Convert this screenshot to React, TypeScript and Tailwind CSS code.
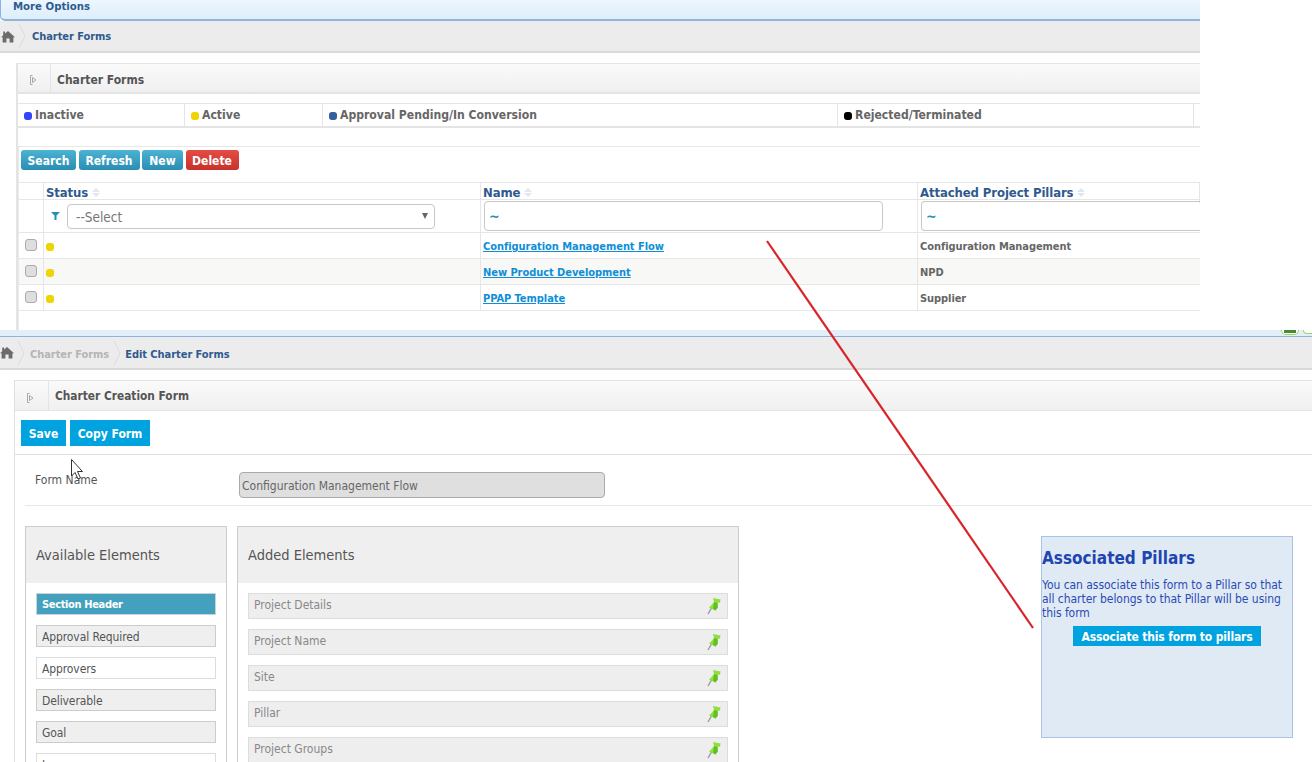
function Home() {
  return <svg width="14" height="13" viewBox="0 0 14 13" className="fill-[#6b6b6b]"><path d="M7 1 L14 7.2 L12.4 7.2 L12.4 12.6 L8.6 12.6 L8.6 8.6 L5.4 8.6 L5.4 12.6 L1.6 12.6 L1.6 7.2 L0 7.2 L2.2 5.2 L2.2 1.6 L4 1.6 L4 3.6 Z" /></svg>
}

function Chevron() {
  return <svg width="8" height="26" viewBox="0 0 8 26" className="fill-none stroke-[#dcdcdc]"><path d="M1 1 L7 13 L1 25" /></svg>
}

function Toggle() {
  return <svg width="7" height="10" viewBox="0 0 7 10" className="fill-none stroke-[#a8a8a8]"><path d="M2.5 0.5 H0.5 V9.5 H2.5 M2.5 2.5 L6 5 L2.5 7.5 Z" /></svg>
}

function Pin() {
  return <svg width="14" height="18" viewBox="0 0 14 18">
    <path d="M1 17 L4.5 11" className="stroke-[#9a9a9a]" strokeWidth="1.4" />
    <path d="M6 1 L13.5 2.5 L13 5.5 L10.5 6 L10.8 10.5 L8.5 13.5 L2 10.5 L5 7.5 L7 5 Z" className="fill-[#8fe03e]" />
    <path d="M7 5 L10.5 6 L10.8 10.5 L8.5 13.5 L6 12 Z" className="fill-[#62c024]" />
  </svg>
}

function Dot({ color }: { color: string }) {
  return <span className={`w-2 h-2 rounded-[3px] shrink-0 ${color}`} />
}

function TopButton({ label, width, red }: { label: string, width: string, red?: boolean }) {
  return <button className={`h-[20px] ${width} pt-[1px] rounded-[3px] text-white text-[12px] font-bold ${red ? "bg-gradient-to-b from-[#e24c44] to-[#c8312a]" : "bg-gradient-to-b from-[#4bb3d2] to-[#2a8db3]"}`}>{label}</button>
}

function Row({ name, pillar, odd }: { name: string, pillar: string, odd?: boolean }) {
  return <div className={`grid grid-cols-[25px_437px_437px_1fr] h-[26px] border-b border-[#e6e6e6] ${odd ? "bg-[#f8f8f6]" : ""}`}>
    <div className="border-r border-[#e6e6e6] flex items-center justify-center pb-[2px] pr-[1px]">
      <span className="w-3 h-3 rounded-[3px] border border-[#ababab] bg-[#dedede]" />
    </div>
    <div className="border-r border-[#e6e6e6] flex items-center pl-[2px] pt-[2px]"><Dot color="bg-[#f0d400]" /></div>
    <div className="border-r border-[#e6e6e6] flex items-center pl-[2px] pt-[3px] text-[11px] tracking-[-0.05px] font-bold text-[#0f8ed8] underline">{name}</div>
    <div className="flex items-center pl-[2px] pt-[3px] text-[11px] tracking-[-0.07px] font-bold text-[#666]">{pillar}</div>
  </div>
}

function SortHead({ label }: { label: string }) {
  return <div className="flex items-center gap-[4px] pl-[2px] border-r border-[#e6e6e6] text-[13px] tracking-[-0.1px] font-bold text-[#2f5a8f]">
    {label}
    <span className="flex flex-col gap-[1px]">
      <span className="w-0 h-0 border-x-[4px] border-x-transparent border-b-[4px] border-b-[#dfe8f2]" />
      <span className="w-0 h-0 border-x-[4px] border-x-transparent border-t-[4px] border-t-[#dfe8f2]" />
    </span>
  </div>
}

function Avail({ label, alt, active }: { label: string, alt?: boolean, active?: boolean }) {
  return <div className={`h-[22px] border flex items-center pl-[5px] pt-[2px] shrink-0 ${active ? "bg-[#43a1bd] border-[#c9d3d8] text-white font-bold text-[11px] tracking-[-0.35px]" : alt ? "bg-[#efefef] border-[#cccccc] text-[#555] text-[12px] tracking-[-0.1px]" : "bg-white border-[#dcdcdc] text-[#555] text-[12px] tracking-[-0.1px]"}`}>{label}</div>
}

function Added({ label }: { label: string }) {
  return <div className="h-[26px] bg-[#eeeeee] border border-[#dcdcdc] flex items-center justify-between pl-[5px] pr-[6px] text-[12px] text-[#888] shrink-0">
    <span className="-mt-[2px]">{label}</span>
    <Pin />
  </div>
}

export default function App() {
  return <div className="relative w-[1312px] h-[762px] overflow-hidden bg-white font-['DejaVu_Sans_Condensed',sans-serif]">
    <div className="w-[1200px] h-[330px] flex flex-col">
      <div className="h-[21px] shrink-0 bg-gradient-to-b from-[#ecf6fe] to-[#ddeefb] border-b-2 border-l border-[#8fb3d9] rounded-bl-[5px] pl-[12px] text-[11.3px] font-bold text-[#2f5a8f] leading-[14px]">More Options</div>
      <div className="h-[32px] shrink-0 bg-[#ececec] border-b-2 border-[#d9d9d9] flex items-center pl-[1px]">
        <Home />
        <span className="ml-[3px] mr-[6px]"><Chevron /></span>
        <span className="pt-[2px] text-[11px] tracking-[-0.05px] font-bold text-[#2f5a8f]">Charter Forms</span>
      </div>
      <div className="mt-[10px] ml-[16px] flex-1 border-l-2 border-[#e4e4e4] flex flex-col">
        <div className="h-[31px] shrink-0 border-t border-b-2 border-[#e4e4e4] bg-gradient-to-b from-[#fafafa] to-[#f0f0f0] flex items-center">
          <div className="w-[33px] h-full border-r border-[#e4e4e4] flex items-center justify-center pt-[4px] pr-[2px]"><Toggle /></div>
          <span className="ml-[6px] pt-[3px] text-[12px] font-bold text-[#555]">Charter Forms</span>
        </div>
        <div className="mt-[9px] h-[25px] shrink-0 border-t border-b-2 border-[#e4e4e4] flex text-[12.1px] font-bold text-[#666]">
          <div className="w-[167px] border-r border-[#e4e4e4] flex items-center gap-[3px] pl-[6px] pt-[1px]"><Dot color="bg-[#3344ff]" />Inactive</div>
          <div className="w-[138px] border-r border-[#e4e4e4] flex items-center gap-[3px] pl-[6px] pt-[1px]"><Dot color="bg-[#f0d400]" />Active</div>
          <div className="w-[515px] border-r border-[#e4e4e4] flex items-center gap-[3px] pl-[6px] pt-[1px]"><Dot color="bg-[#335f9f]" />Approval Pending/In Conversion</div>
          <div className="w-[356px] border-r border-[#e4e4e4] flex items-center gap-[3px] pl-[6px] pt-[1px]"><Dot color="bg-black" />Rejected/Terminated</div>
        </div>
        <div className="mt-[18px] flex-1 border-t border-l border-[#e8e8e8] flex flex-col">
          <div className="h-[36px] shrink-0 border-b border-[#e6e6e6] flex items-start gap-[2.5px] pt-[3px] pl-[2px]">
            <TopButton label="Search" width="w-[55px]" />
            <TopButton label="Refresh" width="w-[61px]" />
            <TopButton label="New" width="w-[41px]" />
            <TopButton label="Delete" width="w-[53px]" red />
          </div>
          <div className="grid grid-cols-[25px_437px_437px_1fr] h-[17px] shrink-0 border-b border-[#e6e6e6]">
            <div className="border-r border-[#e6e6e6]" />
            <SortHead label="Status" />
            <SortHead label="Name" />
            <SortHead label="Attached Project Pillars" />
          </div>
          <div className="grid grid-cols-[25px_437px_437px_1fr] h-[33px] shrink-0 border-b border-[#e6e6e6]">
            <div className="border-r border-[#e6e6e6]" />
            <div className="border-r border-[#e6e6e6] flex items-center pl-[7px] gap-[7px]">
              <svg width="9" height="8" viewBox="0 0 9 8" className="fill-[#2a8db3]"><path d="M0 0 H9 L5.5 3.5 V8 H3.5 V3.5 Z" /></svg>
              <div className="w-[368px] h-[25px] border border-[#c8c8c8] rounded-[4px] flex items-center justify-between pl-[8px] pr-[6px] pt-[2px] text-[13.5px] text-[#777]">
                --Select
                <span className="w-0 h-0 -mt-[2px] border-x-[3px] border-x-transparent border-t-[6px] border-t-[#666]" />
              </div>
            </div>
            <div className="border-r border-[#e6e6e6] flex items-center pl-[3px]">
              <div className="w-[399px] h-[30px] border border-[#c8c8c8] rounded-[4px] flex items-center pl-[4px] text-[14px] font-bold text-[#2a8db3]">~</div>
            </div>
            <div className="flex items-center pl-[3px]">
              <div className="w-full h-[30px] border border-r-0 border-[#c8c8c8] rounded-l-[4px] flex items-center pl-[4px] text-[14px] font-bold text-[#2a8db3]">~</div>
            </div>
          </div>
          <Row name="Configuration Management Flow" pillar="Configuration Management" />
          <Row name="New Product Development" pillar="NPD" odd />
          <Row name="PPAP Template" pillar="Supplier" />
        </div>
      </div>
    </div>

    <div className="h-[432px] flex flex-col">
      <div className="h-[7px] shrink-0 bg-[#e1effa] border-b border-[#8fb3d9]" />
      <div className="h-[33px] shrink-0 bg-[#ececec] border-b-2 border-[#d9d9d9] flex items-center">
        <Home />
        <span className="ml-[3px] mr-[5px]"><Chevron /></span>
        <span className="pt-[5px] text-[11px] tracking-[-0.05px] font-bold text-[#b5b5b5]">Charter Forms</span>
        <span className="ml-[4px] mr-[4px]"><Chevron /></span>
        <span className="pt-[5px] text-[11px] tracking-[-0.05px] font-bold text-[#2f5a8f]">Edit Charter Forms</span>
      </div>
      <div className="mt-[10px] ml-[14px] flex-1 border-l border-[#e0e0e0] flex flex-col">
        <div className="h-[31px] shrink-0 border-t border-b border-[#e4e4e4] bg-gradient-to-b from-[#fafafa] to-[#f0f0f0] flex items-center">
          <div className="w-[34px] h-full border-r border-[#e4e4e4] flex items-center justify-center pt-[4px] pr-[2px]"><Toggle /></div>
          <span className="ml-[6px] pt-[2px] text-[11.8px] font-bold text-[#555]">Charter Creation Form</span>
        </div>
        <div className="h-[44px] shrink-0 border-b border-[#e0e0e0] flex items-start gap-[4px] pt-[9px] pl-[6px]">
          <button className="h-[26px] w-[45px] pt-[1px] bg-[#00a3e0] text-white text-[12px] font-bold">Save</button>
          <button className="h-[26px] w-[80px] pt-[1px] bg-[#00a3e0] text-white text-[12px] font-bold">Copy Form</button>
        </div>
        <div className="h-[51px] shrink-0 ml-[10px] border-b border-[#e8e8e8] flex">
          <span className="ml-[10px] mt-[16px] w-[204px] text-[12px] text-[#555]">Form Name</span>
          <div className="mt-[17px] w-[366px] h-[26px] bg-[#dfdfdf] border border-[#aaaaaa] rounded-[4px] flex items-center pl-[2px] pt-[2px] text-[12px] text-[#666]">Configuration Management Flow</div>
        </div>
        <div className="flex items-start ml-[10px] mt-[20px] gap-[10px] overflow-hidden flex-1">
          <div className="w-[202px] h-[300px] shrink-0 border border-[#cccccc] flex flex-col">
            <div className="h-[56px] shrink-0 bg-[#efefef] flex items-center pl-[10px] pt-[2px] text-[14.5px] text-[#555]">Available Elements</div>
            <div className="flex flex-col gap-[10px] pt-[10px] px-[10px]">
              <Avail label="Section Header" active />
              <Avail label="Approval Required" alt />
              <Avail label="Approvers" />
              <Avail label="Deliverable" alt />
              <Avail label="Goal" alt />
              <Avail label="Issue" />
            </div>
          </div>
          <div className="w-[502px] h-[300px] shrink-0 border border-[#cccccc] flex flex-col">
            <div className="h-[56px] shrink-0 bg-[#efefef] flex items-center pl-[10px] pt-[2px] text-[14.5px] text-[#555]">Added Elements</div>
            <div className="flex flex-col gap-[10px] pt-[10px] px-[10px]">
              <Added label="Project Details" />
              <Added label="Project Name" />
              <Added label="Site" />
              <Added label="Pillar" />
              <Added label="Project Groups" />
            </div>
          </div>
          <div className="ml-[292px] mt-[10px] w-[252px] h-[202px] shrink-0 bg-[#e0eaf4] border border-[#a9c3e6] text-[#2a4bb5]">
            <div className="mt-[10px] text-[17px] leading-[22px] font-bold text-[#1f45b0]">Associated Pillars</div>
            <p className="mt-[9px] text-[12px] leading-[14px] tracking-[-0.05px]">You can associate this form to a Pillar so that all charter belongs to that Pillar will be using this form</p>
            <div className="flex justify-center mt-[6px]">
              <button className="w-[188px] h-[20px] pt-[1px] bg-[#00a3e0] text-white text-[12px] tracking-[-0.15px] font-bold">Associate this form to pillars</button>
            </div>
          </div>
        </div>
      </div>
    </div>

    <div className="absolute left-[1281px] top-[330px] w-[18px] h-[5px] rounded-b-[6px] border border-t-0 border-[#9ad86a] bg-white flex justify-center">
      <span className="w-[12px] h-[3px] bg-[#4c8a2e]" />
    </div>
    <div className="absolute left-[1303px] top-[330px] w-[12px] h-[4px] rounded-bl-[6px] border border-t-0 border-[#9ad86a] bg-white" />

    <svg className="absolute left-0 top-0 pointer-events-none" width="1312" height="762">
      <path d="M767 241 L1033 628" stroke="#d8242a" strokeWidth="2.2" fill="none" />
      <path d="M71.5 459.5 V476 L75 472.5 L78 479 L80.5 478 L77.5 471.5 L82.5 471.5 Z" fill="#fff" stroke="#333" strokeWidth="1" />
    </svg>
  </div>
}
